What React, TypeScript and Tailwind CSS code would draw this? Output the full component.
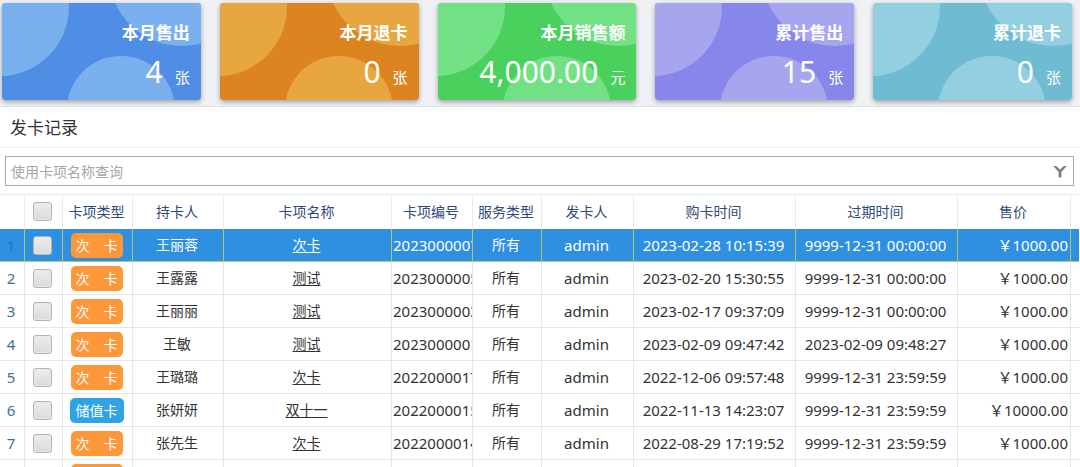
import React, { useState } from 'react';

interface Stat {
  label: string;
  value: string;
  unit: string;
  card: string;
  bubble: string;
}

interface CardRecord {
  type: string;
  holder: string;
  name: string;
  code: string;
  service: string;
  issuer: string;
  boughtAt: string;
  expiresAt: string;
  price: string;
}

const stats: Stat[] = [
  { label: '本月售出', value: '4', unit: '张', card: 'bg-[#508ee6]', bubble: 'fill-[#7ab0ee]' },
  { label: '本月退卡', value: '0', unit: '张', card: 'bg-[#dc8520]', bubble: 'fill-[#e7a640]' },
  { label: '本月销售额', value: '4,000.00', unit: '元', card: 'bg-[#4ad15d]', bubble: 'fill-[#72e085]' },
  { label: '累计售出', value: '15', unit: '张', card: 'bg-[#8786ea]', bubble: 'fill-[#a8a5ef]' },
  { label: '累计退卡', value: '0', unit: '张', card: 'bg-[#6fbbd2]', bubble: 'fill-[#93cfe0]' },
];

const records: CardRecord[] = [
  { type: '次　卡', holder: '王丽蓉', name: '次卡', code: '2023000007', service: '所有', issuer: 'admin', boughtAt: '2023-02-28 10:15:39', expiresAt: '9999-12-31 00:00:00', price: '￥1000.00' },
  { type: '次　卡', holder: '王露露', name: '测试', code: '2023000005', service: '所有', issuer: 'admin', boughtAt: '2023-02-20 15:30:55', expiresAt: '9999-12-31 00:00:00', price: '￥1000.00' },
  { type: '次　卡', holder: '王丽丽', name: '测试', code: '2023000003', service: '所有', issuer: 'admin', boughtAt: '2023-02-17 09:37:09', expiresAt: '9999-12-31 00:00:00', price: '￥1000.00' },
  { type: '次　卡', holder: '王敏', name: '测试', code: '2023000001', service: '所有', issuer: 'admin', boughtAt: '2023-02-09 09:47:42', expiresAt: '2023-02-09 09:48:27', price: '￥1000.00' },
  { type: '次　卡', holder: '王璐璐', name: '次卡', code: '2022000017', service: '所有', issuer: 'admin', boughtAt: '2022-12-06 09:57:48', expiresAt: '9999-12-31 23:59:59', price: '￥1000.00' },
  { type: '储值卡', holder: '张妍妍', name: '双十一', code: '2022000015', service: '所有', issuer: 'admin', boughtAt: '2022-11-13 14:23:07', expiresAt: '9999-12-31 23:59:59', price: '￥10000.00' },
  { type: '次　卡', holder: '张先生', name: '次卡', code: '2022000014', service: '所有', issuer: 'admin', boughtAt: '2022-08-29 17:19:52', expiresAt: '9999-12-31 23:59:59', price: '￥1000.00' },
  { type: '次　卡', holder: '', name: '', code: '', service: '', issuer: '', boughtAt: '', expiresAt: '', price: '' },
];

const headers = ['卡项类型', '持卡人', '卡项名称', '卡项编号', '服务类型', '发卡人', '购卡时间', '过期时间', '售价'];

const StatCard: React.FC<{ stat: Stat }> = ({ stat }) => (
  <div className={`relative h-[97px] overflow-hidden rounded-[4px] shadow-[0_2px_5px_rgba(0,0,0,0.35)] ${stat.card}`}>
    <svg
      className={`absolute inset-0 h-full w-full ${stat.bubble}`}
      viewBox="0 0 199 97"
      preserveAspectRatio="xMidYMid slice"
      aria-hidden="true"
    >
      <circle cx="-2" cy="4" r="69" />
      <circle cx="180" cy="-30.5" r="73.5" />
      <circle cx="119" cy="107" r="54" />
    </svg>
    <div className="relative flex flex-col items-end pt-[18px] pr-[11px] text-white">
      <div className="text-[17px] leading-6 font-bold">{stat.label}</div>
      <div className="flex items-baseline gap-3">
        <span className="text-[30px] leading-[54px]">{stat.value}</span>
        <span className="text-[15px]">{stat.unit}</span>
      </div>
    </div>
  </div>
);

const Tick: React.FC<{ label: string; checked: boolean; onChange: () => void }> = ({ label, checked, onChange }) => (
  <input
    type="checkbox"
    aria-label={label}
    checked={checked}
    onChange={onChange}
    className="mx-auto block size-[19px] appearance-none rounded-[3px] border border-[#b4b4b4] bg-linear-to-b from-[#ededed] to-[#dadada] shadow-[inset_0_0_0_1px_#e8e8e8] checked:from-[#8fb8e0] checked:to-[#5f95cf]"
  />
);

export default function App() {
  const [keyword, setKeyword] = useState('');
  const [selected, setSelected] = useState(0);
  const [ticked, setTicked] = useState<number[]>([]);

  const allTicked = ticked.length === records.length;

  const toggleAll = () => {
    setTicked(allTicked ? [] : records.map((_, i) => i));
  };

  const toggle = (i: number) => {
    setTicked(ticked.includes(i) ? ticked.filter((t) => t !== i) : [...ticked, i]);
  };

  return (
    <div className="flex h-screen flex-col overflow-hidden bg-white font-['Noto_Sans','Noto_Sans_CJK_SC',sans-serif] text-[#333]">
      <section className="grid shrink-0 grid-cols-5 gap-[19px] border-b border-[#dfe0e4] bg-[#eff1f5] pt-[3px] pr-2 pb-[6px] pl-[2px]">
        {stats.map((stat) => (
          <StatCard key={stat.label} stat={stat} />
        ))}
      </section>

      <h2 className="shrink-0 border-b border-[#eee] px-[10px] pt-[2px] text-[17px] leading-[38px]">发卡记录</h2>

      <form className="mt-2 mr-[6px] mb-2 ml-[5px] flex h-[30px] shrink-0 items-center border border-[#a9a9a9]" onSubmit={(e) => e.preventDefault()}>
        <input
          type="text"
          aria-label="使用卡项名称查询"
          placeholder="使用卡项名称查询"
          value={keyword}
          onChange={(e) => setKeyword(e.target.value)}
          className="min-w-0 flex-1 px-[5px] text-[14px] outline-none placeholder:text-[#a6a6a6]"
        />
        <button type="submit" aria-label="查询" className="px-[6px]">
          <svg width="14" height="13" viewBox="0 0 14 13" fill="#808080">
            <path d="M0.3 1 H3.2 L7 4.6 L10.8 1 H13.7 L8.4 7 V12.4 H5.6 V7 Z" />
          </svg>
        </button>
      </form>

      <div className="min-h-0 flex-1 overflow-hidden pr-px">
        <table className="w-full table-fixed border-separate border-spacing-0 text-center text-[15px] whitespace-nowrap">
          <colgroup>
            <col className="w-[25px]" />
            <col className="w-[38px]" />
            <col className="w-[70px]" />
            <col className="w-[91px]" />
            <col className="w-[168px]" />
            <col className="w-[81px]" />
            <col className="w-[69px]" />
            <col className="w-[92px]" />
            <col className="w-[162px]" />
            <col className="w-[162px]" />
            <col className="w-[113px]" />
            <col />
          </colgroup>
          <thead className="text-[14px] text-[#2f4a78] [&_th]:h-[35px] [&_th]:border-t [&_th]:border-r [&_th]:border-[#e6ecf0] [&_th]:pr-[2px] [&_th]:pb-[2px] [&_th]:font-normal [&_th:last-child]:border-r-0">
            <tr>
              <th />
              <th>
                <Tick label="全选" checked={allTicked} onChange={toggleAll} />
              </th>
              {headers.map((h) => (
                <th key={h}>{h}</th>
              ))}
              <th />
            </tr>
          </thead>
          <tbody className="[&_td]:h-[33px] [&_td]:overflow-hidden [&_td]:border-r [&_td]:border-b [&_td]:leading-6 [&_td:last-child]:border-r-0">
            {records.map((r, i) => {
              const active = i === selected;
              return (
                <tr
                  key={i}
                  onClick={() => setSelected(i)}
                  className={active ? 'bg-[#2f8fe0] text-white [&_td]:border-[#b5c46a]' : '[&_td]:border-[#e1e8ec]'}
                >
                  <td className={active ? 'pr-[2px] text-[#2b70ad]' : 'pr-[2px] text-[#3a7199]'}>{i + 1}</td>
                  <td className="pr-[2px]">
                    <Tick label={`选择第${i + 1}行`} checked={ticked.includes(i)} onChange={() => toggle(i)} />
                  </td>
                  <td className="pr-[2px]">
                    <span
                      className={`mx-auto block h-[25px] rounded-[5px] text-[14px] leading-[25px] text-white ${
                        r.type === '储值卡' ? 'w-[54px] bg-[#2fa3e3]' : 'w-[52px] bg-[#fc973a]'
                      }`}
                    >
                      {r.type}
                    </span>
                  </td>
                  <td className="pr-[2px] text-[14px]">{r.holder}</td>
                  <td className="pr-[2px] text-[14px]">
                    <a href="#" className="underline underline-offset-2">{r.name}</a>
                  </td>
                  <td className="pl-px text-left">{r.code}</td>
                  <td className="pr-[2px] text-[14px]">{r.service}</td>
                  <td className="pr-[2px]">{r.issuer}</td>
                  <td className="pr-[2px]">{r.boughtAt}</td>
                  <td className="pr-[2px]">{r.expiresAt}</td>
                  <td className="pr-[2px] text-right">{r.price}</td>
                  <td />
                </tr>
              );
            })}
          </tbody>
        </table>
      </div>
    </div>
  );
}
